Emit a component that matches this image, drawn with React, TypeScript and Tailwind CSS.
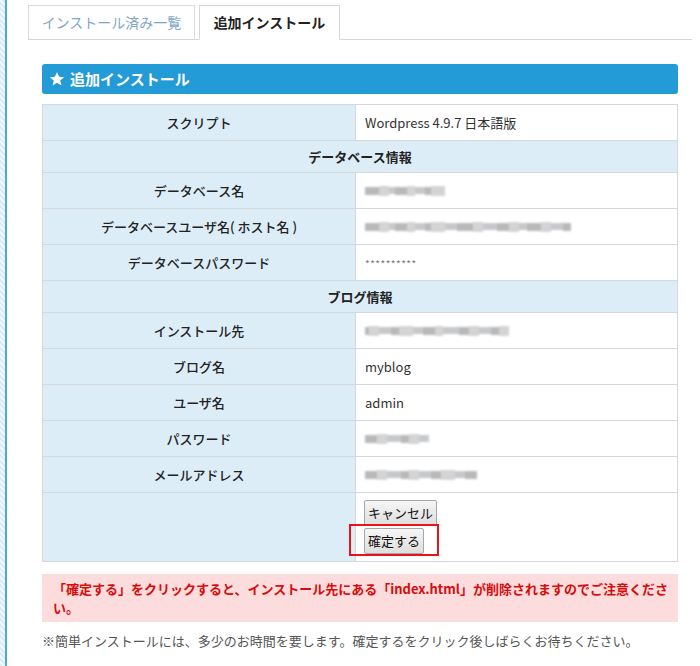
import React from 'react';

const font = { fontFamily: '"Noto Sans CJK JP", "Noto Sans", sans-serif' };

const Mosaic: React.FC<{ widths: number[] }> = ({ widths }) => (
  <div className="flex items-center h-[12px] blur-[1px]">
    {widths.map((w, i) => (
      <span
        key={i}
        className={i % 3 === 0 ? 'h-[8px] bg-[#b9b9b9]' : i % 3 === 1 ? 'h-[10px] bg-[#d4d4d4]' : 'h-[7px] bg-[#c6c8cc]'}
        style={{ width: w }}
      />
    ))}
  </div>
);

const Row: React.FC<{ label: string; children: React.ReactNode }> = ({ label, children }) => (
  <tr className="h-[36px]">
    <th className="w-[313px] border border-[#d3d8dc] bg-[#dcedf8] text-center font-medium text-[#222]">{label}</th>
    <td className="border border-[#d3d8dc] bg-white pl-[9px] text-[#333]">{children}</td>
  </tr>
);

const Section: React.FC<{ label: string }> = ({ label }) => (
  <tr className="h-[32px]">
    <th colSpan={2} className="border border-[#d3d8dc] bg-[#dcedf8] text-center font-bold text-[#222]">
      {label}
    </th>
  </tr>
);

export default function App() {
  return (
    <div className="flex min-h-[666px] bg-white" style={font}>
      <div className="w-[5px] shrink-0 bg-[repeating-linear-gradient(45deg,#d7ecf6_0px,#d7ecf6_2px,#f2f9fd_2px,#f2f9fd_4px)]" />
      <div className="w-[2px] shrink-0 bg-[#4ea9d3]" />
      <div className="flex-1 pl-[21px] pr-[8px] pt-[5px]">
        <div className="flex border-b border-[#d6d6d6] h-[35px] items-end">
          <div className="h-[34px] w-[167px] border border-[#dcdcdc] border-b-0 flex items-center justify-center text-[14px] text-[#7ea8c6]">
            インストール済み一覧
          </div>
          <div className="h-[35px] w-[141px] ml-[4px] -mb-px border border-[#d6d6d6] border-b-white bg-white flex items-center justify-center text-[14px] font-bold text-[#222]">
            追加インストール
          </div>
        </div>

        <div className="mx-[14px] mt-[24px] w-[636px]">
          <div className="h-[30px] rounded-[3px] bg-[#229bd6] flex items-center pl-[7px] text-white font-bold text-[15px]">
            <svg width="16" height="16" viewBox="0 0 24 24" className="mr-[5px]" fill="white">
              <path d="M12 1.5l3.1 7.2 7.7.6-5.9 5 1.8 7.6L12 17.8l-6.7 4.1 1.8-7.6-5.9-5 7.7-.6z" />
            </svg>
            追加インストール
          </div>

          <table className="mt-[10px] w-full border-collapse text-[13px]">
            <tbody>
              <Row label="スクリプト">Wordpress 4.9.7 日本語版</Row>
              <Section label="データベース情報" />
              <Row label="データベース名">
                <Mosaic widths={[14, 10, 6, 12, 8, 10, 6, 14]} />
              </Row>
              <Row label="データベースユーザ名( ホスト名 )">
                <Mosaic widths={[14, 10, 6, 12, 8, 10, 6, 14, 12, 16, 10, 14, 12, 10, 8, 14, 10, 12, 8]} />
              </Row>
              <Row label="データベースパスワード">
                <span className="text-[10px] tracking-[0.5px] text-[#777]">**********</span>
              </Row>
              <Section label="ブログ情報" />
              <Row label="インストール先">
                <Mosaic widths={[4, 10, 12, 8, 14, 10, 12, 8, 16, 10, 10, 12, 8, 10]} />
              </Row>
              <Row label="ブログ名">myblog</Row>
              <Row label="ユーザ名">admin</Row>
              <Row label="パスワード">
                <Mosaic widths={[12, 10, 14, 8, 10, 10]} />
              </Row>
              <Row label="メールアドレス">
                <Mosaic widths={[12, 10, 14, 8, 10, 12, 10, 14, 10, 12]} />
              </Row>
              <tr className="h-[69px]">
                <th className="border border-[#d3d8dc] bg-[#dcedf8]" />
                <td className="border border-[#d3d8dc] bg-white pl-[8px] align-top pt-[7px]">
                  <div className="flex flex-col items-start gap-[2px]">
                    <button className="h-[26px] px-[3px] border border-[#a7a7a7] rounded-[2px] bg-gradient-to-b from-[#f6f6f6] to-[#dedede] text-[13px] text-[#111]">
                      キャンセル
                    </button>
                    <div className="relative">
                      <button className="h-[26px] px-[3px] border border-[#a7a7a7] rounded-[2px] bg-gradient-to-b from-[#f6f6f6] to-[#dedede] text-[13px] text-[#111]">
                        確定する
                      </button>
                      <div className="absolute -left-[15px] -top-[4px] w-[90px] h-[32px] border-2 border-[#e8141a]" />
                    </div>
                  </div>
                </td>
              </tr>
            </tbody>
          </table>

          <div className="mt-[12px] bg-[#fcdcdc] pl-[11px] pr-[2px] py-[5px] text-[13px] font-bold leading-[19px] text-[#d80c0c]">
            「確定する」をクリックすると、インストール先にある「index.html」が削除されますのでご注意ください。
          </div>
          <p className="mt-[9px] text-[13px] text-[#555]">
            ※簡単インストールには、多少のお時間を要します。確定するをクリック後しばらくお待ちください。
          </p>
        </div>
      </div>
    </div>
  );
}
